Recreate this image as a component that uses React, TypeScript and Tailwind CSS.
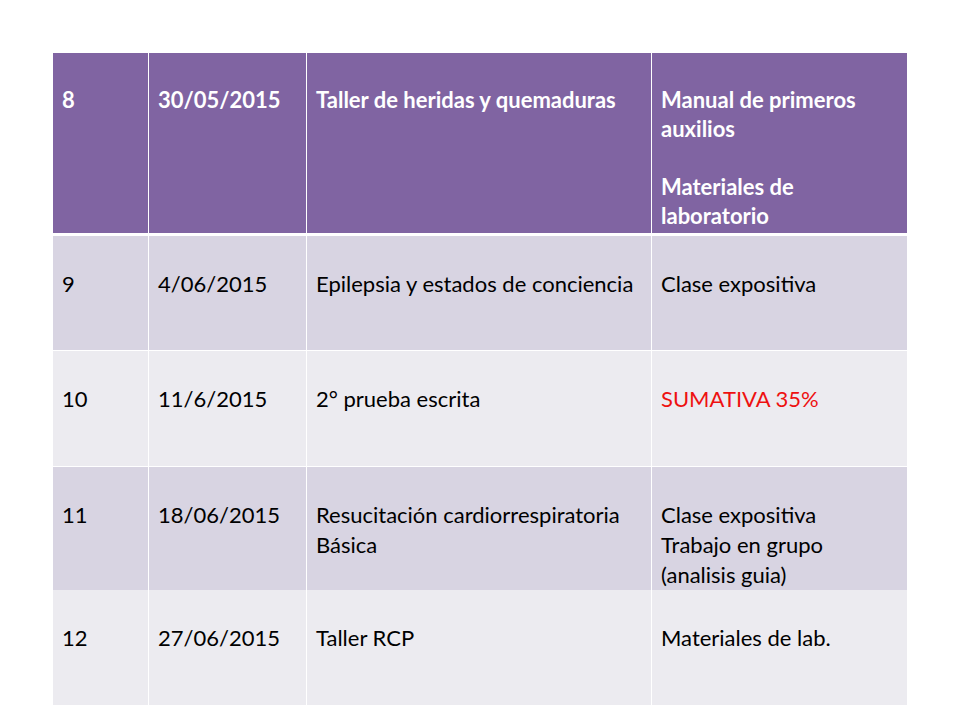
import React from "react";

type Row = {
  n: string;
  date: string;
  topic: React.ReactNode;
  resource: React.ReactNode;
  height: string;
  bg: string;
};

const rows: Row[] = [
  {
    n: "9",
    date: "4/06/2015",
    topic: "Epilepsia y estados de conciencia",
    resource: "Clase expositiva",
    height: "h-[114px]",
    bg: "bg-[#d8d4e2]",
  },
  {
    n: "10",
    date: "11/6/2015",
    topic: "2° prueba escrita",
    resource: <span className="text-[#ee1111]">SUMATIVA 35%</span>,
    height: "h-[115px]",
    bg: "bg-[#ecebf0]",
  },
  {
    n: "11",
    date: "18/06/2015",
    topic: (
      <>
        Resucitación cardiorrespiratoria
        <br />
        Básica
      </>
    ),
    resource: (
      <>
        Clase expositiva
        <br />
        Trabajo en grupo
        <br />
        (analisis guia)
      </>
    ),
    height: "h-[122px]",
    bg: "bg-[#d8d4e2]",
  },
  {
    n: "12",
    date: "27/06/2015",
    topic: "Taller RCP",
    resource: "Materiales de lab.",
    height: "h-[115px]",
    bg: "bg-[#ecebf0]",
  },
];

const cols = "grid grid-cols-[95px_157px_344px_255px] gap-x-px";

export default function App() {
  return (
    <div className="w-[960px] h-[720px] bg-white pt-[53px] pl-[53px] font-['Lato',sans-serif] text-[22px] leading-[30px]">
      <div className="w-[854px] flex flex-col bg-white">
        {/* Header row */}
        <div className={`${cols} h-[180px] mb-[3px] text-white font-bold`}>
          <div className="bg-[#8064a2] pl-[9px] pt-[32px]">8</div>
          <div className="bg-[#8064a2] pl-[9px] pt-[32px]">30/05/2015</div>
          <div className="bg-[#8064a2] pl-[9px] pt-[32px] whitespace-nowrap">Taller de heridas y quemaduras</div>
          <div className="bg-[#8064a2] pl-[9px] pt-[32px] leading-[29px]">
            <p>
              Manual de primeros
              <br />
              auxilios
            </p>
            <p className="mt-[29px]">
              Materiales de
              <br />
              laboratorio
            </p>
          </div>
        </div>

        {/* Body rows */}
        <div className="flex flex-col gap-y-px text-black">
          {rows.map((r) => (
            <div key={r.n} className={`${cols} ${r.height}`}>
              <div className={`${r.bg} pl-[9px] pt-[33px]`}>{r.n}</div>
              <div className={`${r.bg} pl-[9px] pt-[33px]`}>{r.date}</div>
              <div className={`${r.bg} pl-[9px] pt-[33px] whitespace-nowrap`}>{r.topic}</div>
              <div className={`${r.bg} pl-[9px] pt-[33px]`}>{r.resource}</div>
            </div>
          ))}
        </div>
      </div>
    </div>
  );
}
